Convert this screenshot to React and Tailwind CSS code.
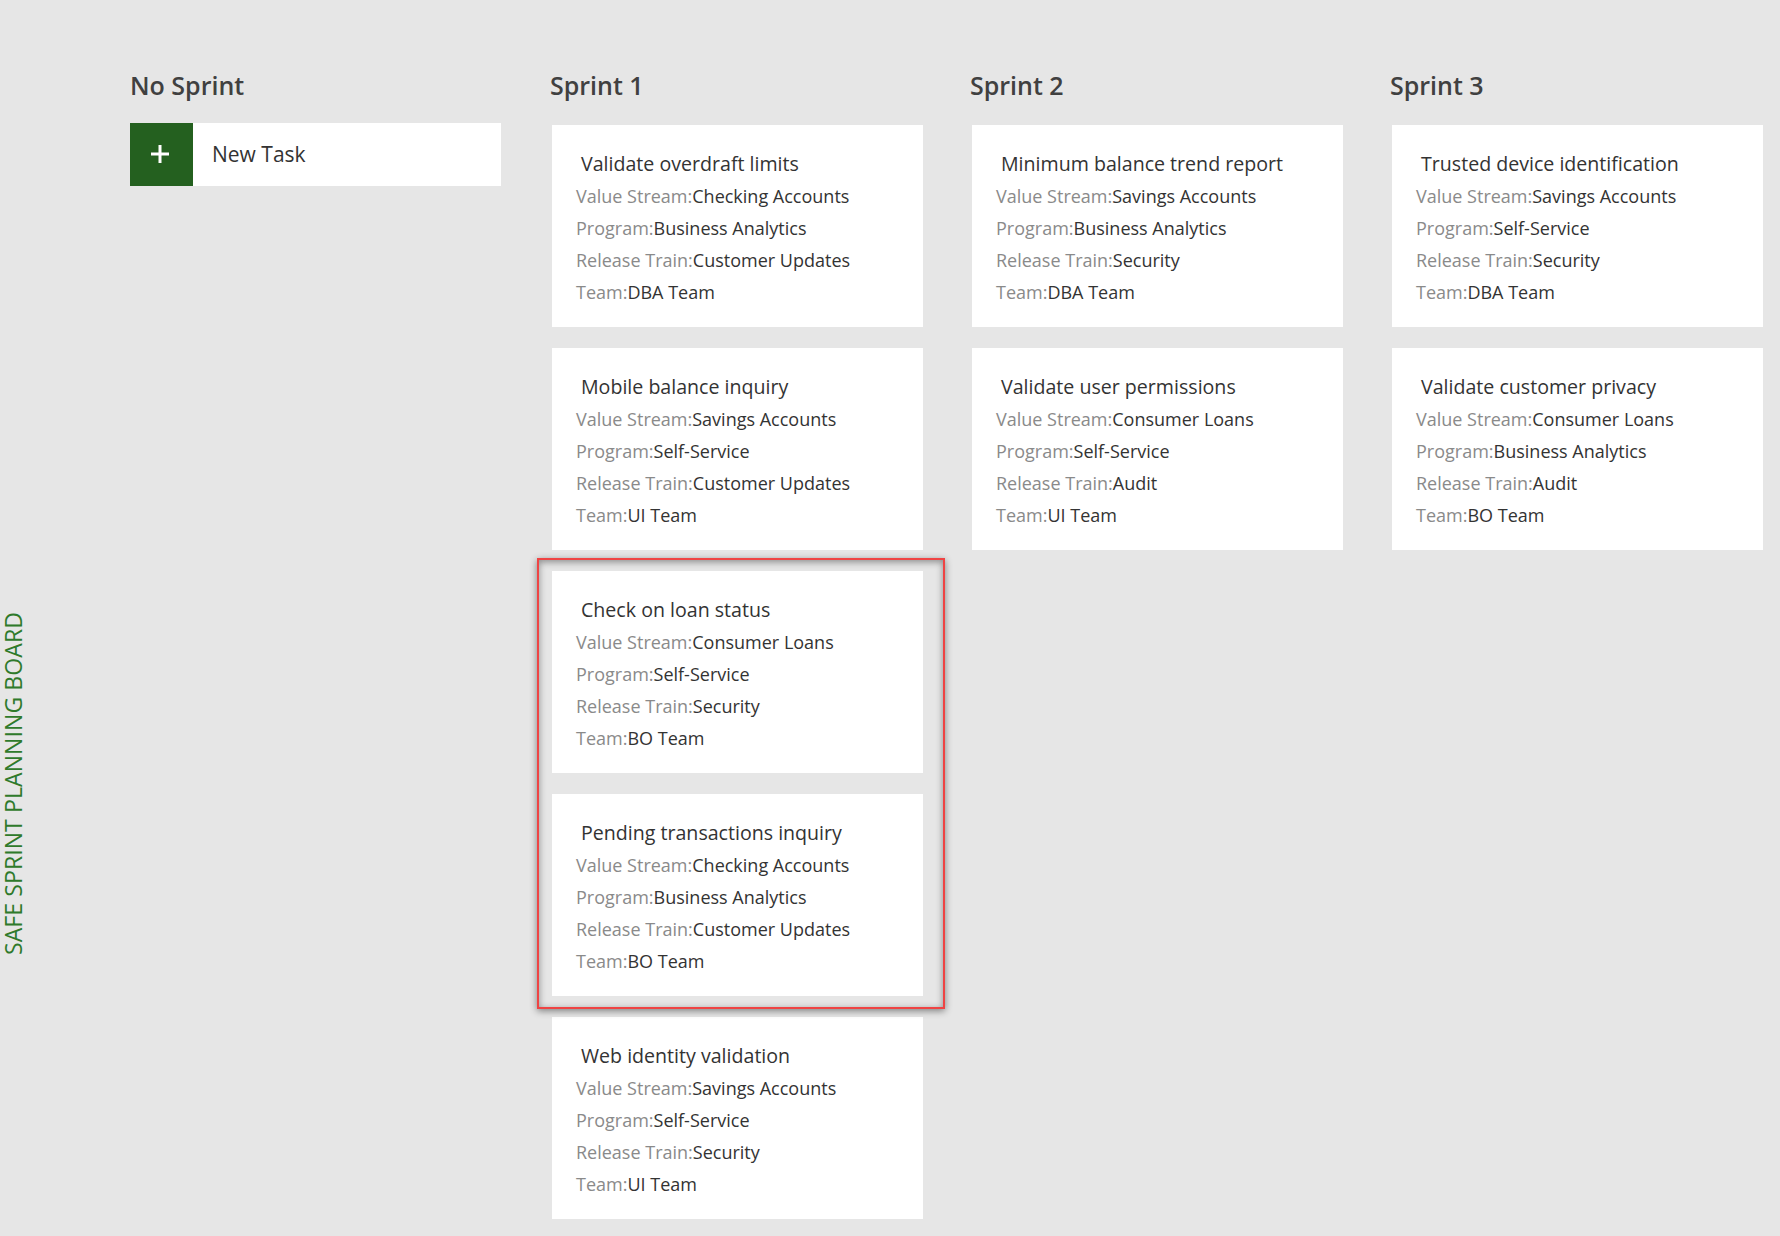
const sprints = [
  {
    name: "Sprint 1",
    tasks: [
      ["Validate overdraft limits", "Checking Accounts", "Business Analytics", "Customer Updates", "DBA Team"],
      ["Mobile balance inquiry", "Savings Accounts", "Self-Service", "Customer Updates", "UI Team"],
      ["Check on loan status", "Consumer Loans", "Self-Service", "Security", "BO Team"],
      ["Pending transactions inquiry", "Checking Accounts", "Business Analytics", "Customer Updates", "BO Team"],
      ["Web identity validation", "Savings Accounts", "Self-Service", "Security", "UI Team"],
    ],
  },
  {
    name: "Sprint 2",
    tasks: [
      ["Minimum balance trend report", "Savings Accounts", "Business Analytics", "Security", "DBA Team"],
      ["Validate user permissions", "Consumer Loans", "Self-Service", "Audit", "UI Team"],
    ],
  },
  {
    name: "Sprint 3",
    tasks: [
      ["Trusted device identification", "Savings Accounts", "Self-Service", "Security", "DBA Team"],
      ["Validate customer privacy", "Consumer Loans", "Business Analytics", "Audit", "BO Team"],
    ],
  },
];

const Field = ({ label, value }) => (
  <div className="text-[18px] leading-[32px] whitespace-nowrap">
    <span className="text-[#8a8a8a]">{label}:</span>
    <span className="text-[#333333]">{value}</span>
  </div>
);

const TaskCard = ({ task }) => {
  const [title, stream, program, train, team] = task;
  return (
    <div className="bg-white w-[371px] h-[202px] pt-[25px] pl-[24px]">
      <div className="ml-[5px] mb-[2px] text-[19.6px] leading-[28px] text-[#333333]">{title}</div>
      <Field label="Value Stream" value={stream} />
      <Field label="Program" value={program} />
      <Field label="Release Train" value={train} />
      <Field label="Team" value={team} />
    </div>
  );
};

const Header = ({ children, className = "" }) => (
  <h2 className={`text-[25px] leading-[36px] font-semibold text-[#404040] ${className}`}>{children}</h2>
);

export default function App() {
  return (
    <div
      className="flex min-h-screen bg-[#e6e6e6]"
      style={{ fontFamily: '"Open Sans", "Noto Sans", sans-serif' }}
    >
      {/* side label */}
      <aside className="w-[30px] shrink-0 pt-[612px] pl-[2px]">
        <div className="[writing-mode:vertical-rl] rotate-180 text-[23px] leading-[23px] tracking-[0.1px] text-[#2f7a2b] whitespace-nowrap">
          SAFE SPRINT PLANNING BOARD
        </div>
      </aside>

      <main className="flex gap-[49px] pl-[100px] pt-[67px]">
        {/* No Sprint */}
        <div className="w-[373px]">
          <Header>No Sprint</Header>
          <div className="mt-[20px] flex items-center w-[371px] h-[63px] bg-white">
            <div className="w-[63px] h-[63px] bg-[#24601f] flex items-center justify-center">
              <svg width="18" height="18" viewBox="0 0 18 18" className="-ml-[3px] -mt-[2px]">
                <path d="M9 0v18M0 9h18" stroke="white" strokeWidth="3" />
              </svg>
            </div>
            <span className="pl-[19px] text-[21px] text-[#333333]">New Task</span>
          </div>
        </div>

        {sprints.map((s) => (
          <div key={s.name} className="w-[371px]">
            <Header className="-ml-[2px]">{s.name}</Header>
            <div className="mt-[22px] flex flex-col gap-[21px]">
              {s.name === "Sprint 1" ? (
                <>
                  <TaskCard task={s.tasks[0]} />
                  <TaskCard task={s.tasks[1]} />
                  <div className="relative flex flex-col gap-[21px]">
                    <TaskCard task={s.tasks[2]} />
                    <TaskCard task={s.tasks[3]} />
                    {/* drag highlight */}
                    <div className="absolute -left-[15px] -right-[22px] -top-[13px] -bottom-[13px] border-2 border-[#ef4444] shadow-[0_2px_7px_rgba(0,0,0,0.45),inset_0_2px_7px_rgba(0,0,0,0.4)] pointer-events-none" />
                  </div>
                  <TaskCard task={s.tasks[4]} />
                </>
              ) : (
                s.tasks.map((t) => <TaskCard key={t[0]} task={t} />)
              )}
            </div>
          </div>
        ))}
      </main>
    </div>
  );
}
